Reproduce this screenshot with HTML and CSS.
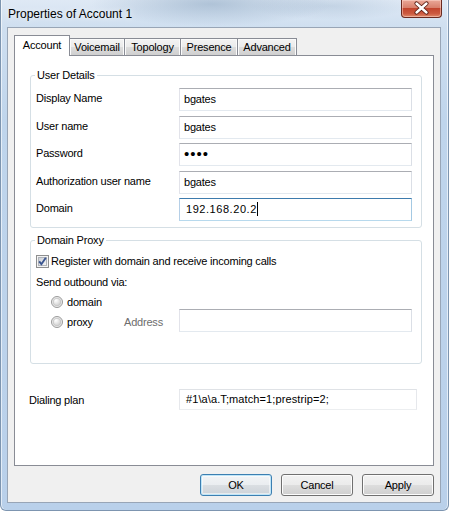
FILE: index.html
```html
<!DOCTYPE html>
<html>
<head>
<meta charset="utf-8">
<link rel="stylesheet" href="styles.css">
</head>
<body>
<div class="window">
  <div class="titlebar">
    <span class="title">Properties of Account 1</span>
    <div class="close">
      <svg width="41" height="18" viewBox="0 0 41 18">
        <path d="M15.5 4.5 L25.5 13.5 M25.5 4.5 L15.5 13.5" stroke="#5a1e14" stroke-width="4.2" stroke-linecap="round"/>
        <path d="M15.5 4.5 L25.5 13.5 M25.5 4.5 L15.5 13.5" stroke="#ffffff" stroke-width="2.4" stroke-linecap="round"/>
      </svg>
    </div>
  </div>
  <div class="client">
    <div class="tabs">
      <div class="tab sel t1">Account</div>
      <div class="tab t2">Voicemail</div>
      <div class="tab t3">Topology</div>
      <div class="tab t4">Presence</div>
      <div class="tab t5">Advanced</div>
    </div>
    <div class="page">
      <fieldset class="group g1">
        <legend>User Details</legend>
        <div class="rows">
          <div class="row"><span class="label">Display Name</span><div class="input">bgates</div></div>
          <div class="row"><span class="label">User name</span><div class="input">bgates</div></div>
          <div class="row"><span class="label">Password</span><div class="input pw">&#8226;&#8226;&#8226;&#8226;</div></div>
          <div class="row"><span class="label">Authorization user name</span><div class="input">bgates</div></div>
          <div class="row"><span class="label">Domain</span><div class="input focus mono">192.168.20.2<span class="caret"></span></div></div>
        </div>
      </fieldset>
      <fieldset class="group g2">
        <legend>Domain Proxy</legend>
        <div class="check-row">
          <svg class="cb" width="13" height="13" viewBox="0 0 13 13">
            <defs>
              <linearGradient id="cbg" x1="0" y1="0" x2="1" y2="1">
                <stop offset="0" stop-color="#cbcfd5"/>
                <stop offset="1" stop-color="#f7f7f7"/>
              </linearGradient>
            </defs>
            <rect x="0.5" y="0.5" width="12" height="12" fill="#f4f4f4" stroke="#8e8f8f"/>
            <rect x="2.5" y="2.5" width="8" height="8" fill="url(#cbg)" stroke="#b0b4ba"/>
            <path d="M3.2 6.4 L5.4 9.2 L9.8 2.8" fill="none" stroke="#3a5590" stroke-width="1.9"/>
          </svg>
          <span>Register with domain and receive incoming calls</span>
        </div>
        <div class="text-row">Send outbound via:</div>
        <div class="radio-row">
          <svg class="rb" width="12" height="12" viewBox="0 0 12 12">
            <defs>
              <radialGradient id="rg1" cx="0.35" cy="0.3" r="0.8">
                <stop offset="0" stop-color="#ffffff"/>
                <stop offset="1" stop-color="#c9c9c9"/>
              </radialGradient>
            </defs>
            <circle cx="6" cy="6" r="5.5" fill="#ececec" stroke="#9a9a9a"/>
            <circle cx="6" cy="6" r="3.8" fill="url(#rg1)" stroke="#c2c2c2" stroke-width="0.8"/>
          </svg>
          <span>domain</span>
        </div>
        <div class="radio-row proxy">
          <span class="radio-label">
            <svg class="rb" width="12" height="12" viewBox="0 0 12 12">
              <circle cx="6" cy="6" r="5.5" fill="#ececec" stroke="#9a9a9a"/>
              <circle cx="6" cy="6" r="3.8" fill="url(#rg1)" stroke="#c2c2c2" stroke-width="0.8"/>
            </svg>
            <span>proxy</span>
          </span>
          <span class="addr">Address</span>
          <div class="input addr-input"></div>
        </div>
      </fieldset>
      <div class="dial">
        <span class="dial-label">Dialing plan</span>
        <div class="input dial-input mono2">#1\a\a.T;match=1;prestrip=2;</div>
      </div>
    </div>
    <div class="buttons">
      <div class="btn default">OK</div>
      <div class="btn">Cancel</div>
      <div class="btn">Apply</div>
    </div>
  </div>
</div>
</body>
</html>
```
FILE: styles.css
```css
html, body {
  margin: 0;
  padding: 0;
}
body {
  width: 449px;
  height: 511px;
  overflow: hidden;
  font-family: "Liberation Sans", Arial, sans-serif;
  font-size: 11px;
  letter-spacing: -0.2px;
  color: #000;
}
.window {
  box-sizing: border-box;
  width: 449px;
  height: 511px;
  display: flex;
  flex-direction: column;
  padding: 0 7px 7px 6px;
  background:
    radial-gradient(ellipse 120px 22px at 210px 4px, rgba(120,150,180,0.45), rgba(120,150,180,0) 100%),
    radial-gradient(ellipse 80px 14px at 330px 6px, rgba(150,175,200,0.35), rgba(150,175,200,0) 100%),
    linear-gradient(180deg, #dfe9f5 0px, #cfdff0 27px, #bfd5ec 120px, #b9d0ea 100%);
  border: 1px solid #7d95b0;
  border-top: none;
  border-radius: 0 0 6px 6px;
  box-shadow: inset 1px 0 0 rgba(255,255,255,0.6), inset -1px 0 0 rgba(255,255,255,0.6);
}
.titlebar {
  height: 27px;
  display: flex;
  justify-content: space-between;
  align-items: flex-start;
  flex: none;
  margin: 0 -7px 0 -6px;
}
.title {
  padding-left: 7px;
  margin-top: 7px;
  font-size: 12px;
  letter-spacing: 0;
  line-height: 14px;
  color: #000;
  text-shadow: 0 0 6px rgba(255,255,255,0.9);
}
.close {
  width: 41px;
  height: 18px;
  margin-right: 6px;
  box-sizing: border-box;
  border: 1px solid #6a2a20;
  border-top: none;
  border-radius: 0 0 4px 4px;
  background: linear-gradient(180deg, #eaa898 0%, #d8806c 45%, #c2452d 50%, #cc5a40 80%, #e08a6a 100%);
  box-shadow: inset 0 0 0 1px rgba(255,220,210,0.5);
  overflow: hidden;
}
.close svg {
  display: block;
  margin: -1px 0 0 -1px;
}
.client {
  flex: 1;
  display: flex;
  flex-direction: column;
  background: #f0f0f0;
  border: 1px solid #98a5b6;
  padding: 7px 6px 6px 6px;
  min-height: 0;
}
.tabs {
  display: flex;
  align-items: flex-end;
  height: 21px;
  margin-bottom: -1px;
  position: relative;
  z-index: 1;
  flex: none;
}
.tab {
  box-sizing: border-box;
  height: 17px;
  margin-bottom: 1px;
  border: 1px solid #898c95;
  border-bottom: none;
  background: linear-gradient(180deg, #f3f3f3 0%, #ebebeb 50%, #dddddd 51%, #cfcfcf 100%);
  box-shadow: inset 1px 1px 0 #fbfbfb, inset -1px 0 0 #fbfbfb;
  text-align: center;
  line-height: 16px;
  margin-left: -1px;
}
.tab.sel {
  height: 21px;
  margin-bottom: 0;
  background: #ffffff;
  box-shadow: none;
  line-height: 18px;
  margin-left: 0;
  position: relative;
  z-index: 2;
}
.t1 { width: 56px; }
.t2 { width: 56px; }
.t3 { width: 57px; }
.t4 { width: 58px; }
.t5 { width: 60px; }
.page {
  flex: 1;
  background: #ffffff;
  border: 1px solid #898c95;
  padding: 12px 11px 0 15px;
  display: flex;
  flex-direction: column;
}
.group {
  margin: 0;
  padding: 0 8px 6px 5px;
  border: 1px solid #d5dfe5;
  border-radius: 3px;
  min-width: 0;
}
.group legend {
  padding: 0 2px;
  margin-left: -1px;
  line-height: 14px;
  color: #000;
}
.g1 .rows {
  display: flex;
  flex-direction: column;
  gap: 4.5px;
  padding-top: 6px;
}
.row {
  display: flex;
  align-items: flex-start;
}
.label {
  width: 143px;
  padding-top: 4px;
  line-height: 13px;
  flex: none;
}
.input {
  box-sizing: border-box;
  width: 233px;
  height: 23px;
  border: 1px solid;
  border-color: #abadb3 #dbdfe6 #e3e9ef #e2e3ea;
  background: #fff;
  padding: 0 4px;
  line-height: 21px;
  white-space: nowrap;
  overflow: hidden;
}
.input.pw {
  font-size: 15px;
  letter-spacing: 1px;
  line-height: 20px;
}
.input.focus {
  border-color: #3d7bad #a4c9e3 #b7d9ed #b5cfe7;
}
.mono {
  padding-left: 6px;
  letter-spacing: 0.55px;
}
.caret {
  display: inline-block;
  width: 1px;
  height: 14px;
  background: #000;
  vertical-align: -3px;
  margin-left: 0;
}
.g2 {
  margin-top: 5px;
  padding-bottom: 31px;
}
.check-row {
  display: flex;
  align-items: center;
  height: 15px;
  margin-top: 6px;
  gap: 2px;
}
.cb { flex: none; margin-top: 2px; }
.text-row {
  height: 15px;
  line-height: 15px;
  margin-top: 7px;
}
.radio-row {
  display: flex;
  align-items: center;
  height: 15px;
  margin-top: 4px;
  padding-left: 15px;
  gap: 4px;
}
.rb { flex: none; }
.radio-row.proxy {
  height: 23px;
  margin-top: 0;
  gap: 0;
}
.radio-label {
  display: flex;
  align-items: center;
  gap: 4px;
  width: 73px;
  padding-top: 3px;
}
.addr {
  width: 55px;
  color: #6d6d6d;
  padding-top: 3px;
}
.addr-input {
  width: 233px;
}
.dial {
  display: flex;
  align-items: center;
  margin-top: 25px;
  margin-left: -1px;
}
.dial-label {
  width: 150px;
  padding-top: 0;
}
.dial-input {
  width: 238px;
  height: 21px;
  line-height: 19px;
  border-color: #dfe2e6 #e6e8ec #eceef0 #e6e8ec;
  padding-left: 6px;
}
.mono2 {
  letter-spacing: 0.1px;
}
.buttons {
  display: flex;
  justify-content: flex-end;
  gap: 9px;
  margin-top: 8px;
  flex: none;
}
.btn {
  box-sizing: border-box;
  width: 72px;
  height: 22px;
  border: 1px solid #707070;
  border-radius: 3px;
  background: linear-gradient(180deg, #f2f2f2 0%, #ebebeb 50%, #dddddd 51%, #cfcfcf 100%);
  box-shadow: inset 0 0 0 1px #fcfcfc;
  text-align: center;
  line-height: 20px;
}
.btn.default {
  border-color: #3c7fb1;
  box-shadow: inset 0 0 0 1px #bfe5f8, inset 0 0 0 2px rgba(255,255,255,0.5);
  background: linear-gradient(180deg, #f2f4f6 0%, #eaedf0 50%, #dadee2 51%, #ccd2d8 100%);
}
```
